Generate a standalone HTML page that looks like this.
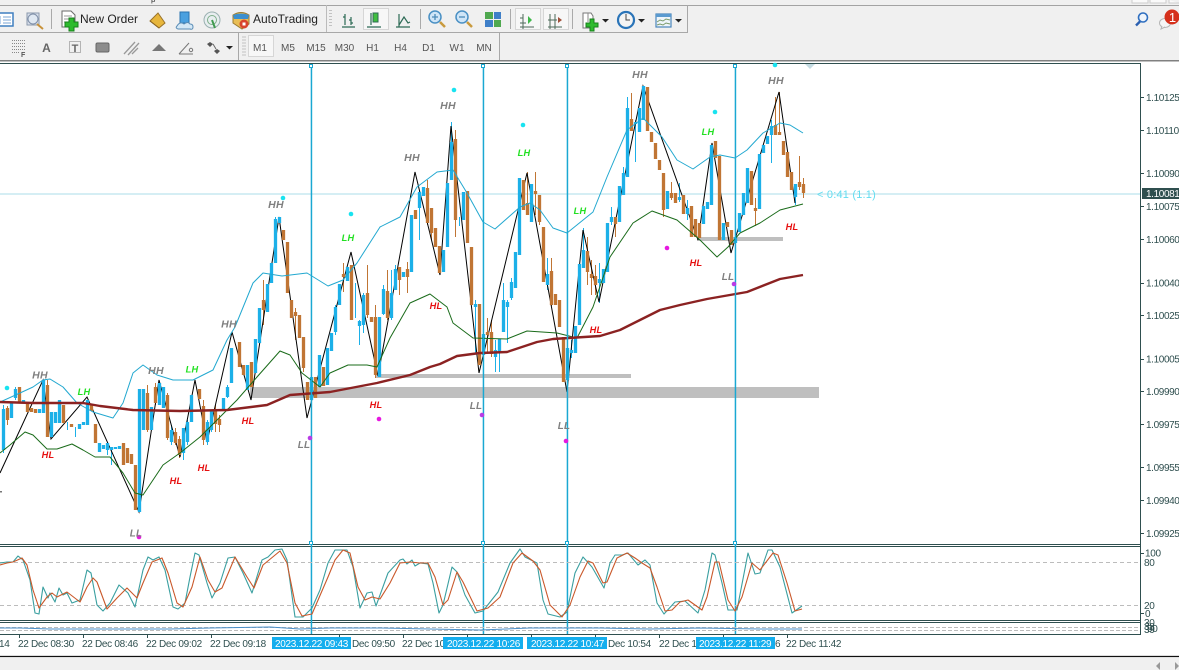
<!DOCTYPE html>
<html><head><meta charset="utf-8"><style>
html,body{margin:0;padding:0;background:#fff;width:1179px;height:670px;overflow:hidden}
svg{display:block;font-family:"Liberation Sans",sans-serif}
.p{font-size:10px;fill:#2f4f4f;letter-spacing:-.38px}
.t{font-size:10px;fill:#2f4f4f;letter-spacing:-.3px}
.w{font-size:10px;fill:#fff;letter-spacing:-.3px}
.lb{font-weight:bold;font-style:italic;text-anchor:middle;letter-spacing:.3px}
.hh{font-size:10.5px}.ll{font-size:9.8px}.g{font-size:9.2px}
.tf{font-size:10px;fill:#555;text-anchor:middle}
</style></head><body>
<svg width="1179" height="670" viewBox="0 0 1179 670" xmlns="http://www.w3.org/2000/svg">
<!-- toolbars -->
<rect width="1179" height="61" fill="#f0f0f0"/>
<rect x="0" y="5" width="1179" height="1" fill="#a3a3a3"/>
<rect x="0" y="32" width="687" height="1" fill="#a8a8a8"/>
<rect x="687" y="5" width="1" height="28" fill="#a8a8a8"/>
<rect x="499" y="33" width="1" height="27" fill="#a8a8a8"/>
<rect x="238" y="33" width="1" height="27" fill="#a8a8a8"/>
<rect x="326" y="5" width="1" height="27" fill="#bbb"/>
<rect x="0" y="60" width="1179" height="1.5" fill="#808080"/>
<path d="M1132 0v3h16v-3M1150 0v3h16v-3M1169 0v3h10" fill="#fafafa" stroke="#ccc"/>
<text x="151" y="2" font-size="8" fill="#333">p</text>
<!-- active buttons -->
<g fill="#f7f7f7" stroke="#d6d6d6"><rect x="363.500" y="8.500" width="25" height="21"/><rect x="515.500" y="8.500" width="25" height="21"/><rect x="543.500" y="8.500" width="25" height="21"/><rect x="248.500" y="35.500" width="25" height="21"/></g>
<!-- row1 icons -->
<rect x="-6" y="13" width="19" height="13" fill="#fff" stroke="#3f7fc0" stroke-width="1.500"/><path d="M0 16v8M3 17h8M3 20h8M3 23h8" stroke="#7aa6d6"/>
<rect x="27" y="13" width="12" height="12" fill="#d8dfea" stroke="#8a99ad"/><circle cx="33" cy="19" r="5" fill="#dfe8f2" stroke="#7f8fa8"/><path d="M37 24l6 5" stroke="#c8923a" stroke-width="2"/>
<rect x="51" y="9" width="1" height="20" fill="#aaa"/>
<path d="M62 11h9l4 4v12H62z" fill="#fff" stroke="#6a6a6a"/><path d="M64 16h8M64 19h8M64 22h5" stroke="#999"/>
<path d="M69 18h5v4h4v5h-4v4h-5v-4h-4v-5h4z" fill="#2dbb2d" stroke="#17801c"/>
<text x="80" y="23" font-size="12" fill="#222">New Order</text>
<path d="M150 21l8-8 7 10-6 5z" fill="#e7b63c" stroke="#99722a"/><path d="M150 21l9 7" stroke="#8a6420"/>
<rect x="180" y="12" width="9" height="11" fill="#4aa0df" stroke="#2a73b0"/><path d="M177 26q3-5 7-2 4-3 6 0 3 0 3 3t-3 2h-12q-3-1-1-3z" fill="#d4e8f6" stroke="#5a8cb5"/>
<circle cx="212" cy="20" r="8" fill="#e8eef0" stroke="#9ab0b0"/><circle cx="212" cy="20" r="4.500" fill="none" stroke="#7fae8a"/><path d="M212 20l3 8" stroke="#3f9a4f" stroke-width="2"/>
<path d="M233 15q8-5 16 0v9l-7 5-9-6z" fill="#e9be55" stroke="#9c7b30"/><path d="M233 15q8-3 16 0l-1 4h-14z" fill="#3c8fce"/><circle cx="244" cy="24" r="4.500" fill="#d8442c"/><rect x="242.500" y="22.500" width="3" height="3" fill="#fff"/>
<text x="253" y="23" font-size="12" fill="#222">AutoTrading</text>
<g fill="#c2c2c2"><rect x="329" y="10" width="3" height="1"/><rect x="329" y="13" width="3" height="1"/><rect x="329" y="16" width="3" height="1"/><rect x="329" y="19" width="3" height="1"/><rect x="329" y="22" width="3" height="1"/><rect x="329" y="25" width="3" height="1"/></g>
<g fill="none" stroke="#2c6a55" stroke-width="1.200"><path d="M342 27h13M345 14v11M351 17v8M343 17h2M351 23h2M349 20h2"/><path d="M367 27h14M371 13v12"/><path d="M396 27h14M399 14v13M399 25l5-8 4 6 2-1"/></g>
<rect x="373" y="13" width="5" height="9" fill="#3fbf3f" stroke="#2c6a55"/>
<rect x="420" y="9" width="1" height="20" fill="#aaa"/>
<circle cx="435" cy="17" r="6" fill="#cfe5f7" stroke="#4a90c4" stroke-width="1.500"/><path d="M432 17h6M435 14v6" stroke="#4a8ab8" stroke-width="1.300"/><path d="M440 22l5 5" stroke="#c99a3e" stroke-width="2.500"/>
<circle cx="462" cy="17" r="6" fill="#cfe5f7" stroke="#4a90c4" stroke-width="1.500"/><path d="M459 17h6" stroke="#4a8ab8" stroke-width="1.300"/><path d="M467 22l5 5" stroke="#c99a3e" stroke-width="2.500"/>
<rect x="485" y="12" width="8" height="7" fill="#4fa84f"/><rect x="494" y="12" width="7" height="7" fill="#3f7fc8"/><rect x="485" y="20" width="8" height="7" fill="#3f7fc8"/><rect x="494" y="20" width="7" height="7" fill="#4fa84f"/>
<rect x="510" y="9" width="1" height="20" fill="#aaa"/>
<path d="M520 27h14M523 14v15M520 23h6M520 18h3" stroke="#4d6a5a" fill="none"/><path d="M528 16l4 4-4 4z" fill="#3fb84a"/>
<path d="M548 27h14M550 14v15M555 14v15M548 20h9" stroke="#4d6a5a" fill="none"/><path d="M562 20l-4-3v6z" fill="#a0503a"/>
<rect x="572" y="9" width="1" height="20" fill="#aaa"/>
<path d="M583 13h8l2 3v12h-10z" fill="#fff" stroke="#777"/><path d="M588 13v9" stroke="#888"/>
<path d="M590 19h4v4h4v4h-4v4h-4v-4h-4v-4h4z" fill="#2dbb2d" stroke="#17801c"/>
<path d="M602 19h7l-3.500 3.500z" fill="#222"/>
<circle cx="626" cy="20" r="8" fill="#f4f4f4" stroke="#2a74b8" stroke-width="2.200"/><path d="M626 14v6h4" stroke="#444" fill="none"/>
<path d="M638 19h7l-3.500 3.500z" fill="#222"/>
<rect x="656" y="14" width="15" height="13" fill="#eef5fa" stroke="#4a85bb" stroke-width="1.200"/><rect x="656" y="14" width="15" height="3" fill="#5a9ad0"/><path d="M657 22l3-2 3 1 3-2 4 1M657 25l3-1 3 1 3-2 4 1" stroke="#7a9a6a" fill="none"/>
<path d="M675 19h7l-3.500 3.500z" fill="#222"/>
<circle cx="1143" cy="17.500" r="4.500" fill="#eef4fb" stroke="#2f6fc0" stroke-width="1.600"/><path d="M1140 21.500l-4 4" stroke="#2a5fb0" stroke-width="2.400"/>
<ellipse cx="1165" cy="23" rx="5.500" ry="4.500" fill="#f5f5f5" stroke="#b5b5b5"/><path d="M1162 26l-1 3 4-2" fill="#f5f5f5" stroke="#b5b5b5"/>
<circle cx="1172" cy="17" r="7.500" fill="#d5301c"/><text x="1172.500" y="22" font-size="13" fill="#fff" text-anchor="middle">1</text>
<!-- row2 icons -->
<path d="M12 40.500h13M12 43.500h13M12 46.500h13M12 49.500h13M12 52.500h8" stroke="#888" stroke-dasharray="1 1" fill="none"/>
<text x="21" y="57" font-size="7" font-weight="bold" fill="#555">F</text>
<text x="46.500" y="52" font-size="12" font-weight="bold" fill="#666" text-anchor="middle">A</text>
<rect x="69.500" y="41.500" width="11" height="11" fill="none" stroke="#777" stroke-dasharray="1 1"/><text x="75" y="52" font-size="11" font-weight="bold" fill="#666" text-anchor="middle">T</text>
<rect x="96" y="43" width="13" height="9" rx="1.500" fill="#8c8c8c" stroke="#666"/>
<path d="M124 54l11-12M128 55l11-12M132 54l6-6" stroke="#999" stroke-width="1.300"/>
<path d="M152 51l7-7 7 7z" fill="#777"/>
<path d="M179 54h14M179 54l10-11" stroke="#777" fill="none"/><circle cx="191" cy="50" r="1.700" fill="none" stroke="#777"/>
<path d="M210 42l3 2-3 3-3-3zM217 49l3 2-3 3-3-3z" fill="#555"/><path d="M213 44l3 5" stroke="#666"/>
<path d="M226 46h7l-3.500 3.500z" fill="#222"/>
<path d="M242 37h4M242 40h4M242 43h4M242 46h4M242 49h4M242 52h4M242 55h4" stroke="#c2c2c2"/>
<text class="tf" x="260" y="51">M1</text><text class="tf" x="288" y="51">M5</text><text class="tf" x="316" y="51">M15</text><text class="tf" x="344.500" y="51">M30</text><text class="tf" x="372.500" y="51">H1</text><text class="tf" x="400.500" y="51">H4</text><text class="tf" x="428.500" y="51">D1</text><text class="tf" x="457" y="51">W1</text><text class="tf" x="484" y="51">MN</text>
<!-- chart frame -->
<rect x="0" y="63" width="1140" height="1" fill="#2f4f4f"/>
<rect x="1140" y="63" width="1" height="571" fill="#2f4f4f"/>
<rect x="0" y="544" width="1140" height="1" fill="#2f4f4f"/>
<rect x="0" y="546" width="1141" height="1" fill="#2f4f4f"/>
<rect x="0" y="620" width="1141" height="1" fill="#2f4f4f"/>
<rect x="0" y="622" width="1141" height="1" fill="#2f4f4f"/>
<rect x="0" y="634" width="1141" height="1" fill="#2f4f4f"/>
<!-- grey zones -->
<rect x="250" y="387" width="569" height="11" fill="#bfbfbf"/>
<rect x="375" y="374" width="256" height="4" fill="#bfbfbf"/>
<rect x="697" y="237" width="86" height="4" fill="#bfbfbf"/>
<!-- crosshair -->
<rect x="0" y="193.500" width="1140" height="1" fill="#abdde8"/>
<!-- wicks -->
<path fill="none" stroke="#1cb0e8" d="M3.500 405V453M15.500 387V400M67.500 422V430M75.500 427V437M107.500 442V455M111.500 447V465M171.500 425V445M183.500 428V460M187.500 420V445M207.500 420V445M211.500 410V432M227.500 385V398M275.500 217V263M335.500 305V335M355.500 283V318M359.500 320V345M363.500 293V333M383.500 285V315M391.500 270V320M395.500 265V290M419.500 190V240M451.500 122V180M459.500 217V226M475.500 300V353M483.500 334V380M495.500 340V372M499.500 339V372M503.500 283V332M507.500 300V343M511.500 278V300M547.500 258V290M571.500 340V358M583.500 228V268M599.500 263V303M611.500 207V225M623.500 167V195M627.500 97V177M635.500 120V162M679.500 183V202M687.500 200V220M771.500 120V163M795.500 184V205"/>
<path fill="none" stroke="#c07534" d="M7.500 406V425M47.500 380V437M147.500 385V432M155.500 383V405M167.500 393V440M175.500 428V445M179.500 436V458M203.500 400V445M215.500 405V432M219.500 415V432M263.500 280V325M295.500 308V340M303.500 337V372M343.500 263V292M367.500 265V318M375.500 305V378M387.500 270V320M399.500 267V295M407.500 262V293M427.500 180V225M431.500 208V240M455.500 130V237M487.500 318V353M491.500 320V357M527.500 172V215M535.500 172V215M539.500 195V225M551.500 258V306M587.500 237V285M591.500 260V295M595.500 265V295M615.500 217V237M631.500 93V131M663.500 173V217M671.500 182V200M755.500 198V226M775.500 97V135M779.500 92V135M799.500 156V190M803.500 178V198"/>
<!-- black zigzag -->
<polyline fill="none" stroke="#000" stroke-width="1" points="0,473 43,380 51,439 87,397 139,512 159,380 180,457 195,380 207,442 232,332 251,400 279,217 307,418 351,252 378,376 415,172 440,275 451,126 479,373 527,173 567,392 583,230 599,302 643,86 698,240 712,143 731,253 779,92 795,203"/>
<!-- bodies -->
<path fill="none" stroke="#c07534" stroke-width="3.300" d="M7.500 408V420M19.500 387V402M27.500 402V412M31.500 408V412M35.500 409V413M47.500 385V437M63.500 405V423M71.500 424V427M91.500 405V411M95.500 424V443M123.500 443V465M127.500 448V463M131.500 454V464M135.500 465V510M147.500 393V430M155.500 387V403M167.500 395V438M175.500 432V443M179.500 439V455M199.500 389V399M203.500 406V440M215.500 409V424M219.500 419V425M239.500 342V367M243.500 365V375M251.500 362V387M263.500 300V310M283.500 230V240M287.500 242V293M291.500 300V318M295.500 312V316M299.500 315V338M303.500 337V368M307.500 382V400M315.500 377V398M323.500 367V386M343.500 274V277M351.500 265V320M367.500 293V315M371.500 317V322M375.500 317V375M387.500 291V318M399.500 267V280M407.500 269V277M415.500 210V219M427.500 188V223M431.500 208V233M435.500 228V247M439.500 246V273M455.500 139V220M467.500 191V243M471.500 247V305M479.500 304V365M487.500 332V335M491.500 332V354M523.500 180V210M527.500 203V215M535.500 191V194M539.500 195V222M543.500 227V282M551.500 271V305M555.500 294V305M559.500 300V327M563.500 337V382M587.500 251V272M591.500 274V278M595.500 276V285M615.500 217V224M631.500 119V131M647.500 87V131M651.500 132V142M655.500 143V159M659.500 160V170M663.500 173V210M671.500 193V198M675.500 193V203M683.500 195V214M691.500 206V237M695.500 219V237M699.500 223V238M715.500 141V158M719.500 156V240M727.500 222V227M731.500 230V245M751.500 171V205M755.500 208V211M775.500 125V135M779.500 132V135M783.500 141V155M787.500 152V177M791.500 172V190M799.500 182V187M803.500 184V193"/>
<path fill="none" stroke="#1cb0e8" stroke-width="3.300" d="M3.500 409V450M11.500 403V418M15.500 389V398M23.500 400V403M39.500 409V413M43.500 380V413M51.500 412V437M55.500 412V423M59.500 400V423M79.500 424V429M83.500 422V425M87.500 400V425M99.500 443V452M103.500 445V449M107.500 443V450M111.500 447V450M115.500 447V449M119.500 446V449M139.500 389V512M143.500 389V430M151.500 407V430M159.500 383V405M163.500 387V408M171.500 430V442M183.500 428V453M187.500 422V442M191.500 395V422M207.500 422V442M211.500 410V430M223.500 398V410M227.500 387V397M231.500 348V383M247.500 365V390M255.500 339V373M259.500 308V343M267.500 284V312M271.500 263V283M275.500 219V263M279.500 217V223M311.500 377V400M319.500 355V387M327.500 348V385M331.500 333V351M335.500 307V332M339.500 284V305M347.500 267V281M359.500 321V326M363.500 295V325M379.500 317V377M383.500 289V314M391.500 293V318M395.500 269V290M403.500 272V277M411.500 215V272M419.500 192V208M423.500 187V196M443.500 250V272M447.500 183V247M451.500 142V180M463.500 192V220M475.500 304V307M483.500 334V355M495.500 350V357M499.500 339V353M503.500 300V332M507.500 302V307M511.500 282V298M515.500 252V288M519.500 178V255M531.500 184V222M547.500 274V285M567.500 348V380M571.500 350V353M575.500 326V353M579.500 264V325M583.500 250V268M599.500 279V283M603.500 269V283M607.500 223V272M611.500 217V222M619.500 186V222M623.500 173V195M627.500 108V177M635.500 122V124M639.500 108V132M643.500 86V120M667.500 191V209M679.500 197V200M687.500 208V214M703.500 206V224M707.500 202V209M711.500 145V205M723.500 223V240M735.500 237V243M739.500 213V232M743.500 193V215M747.500 168V203M759.500 154V209M763.500 145V153M767.500 136V144M771.500 126V135M795.500 184V197"/>
<!-- band lines -->
<polyline fill="none" stroke="#22a8d0" stroke-linejoin="round" points="0,402 20,393 33,387 43,380 50,379 63,387 77,403 93,412 113,418 123,403 133,373 143,365 157,375 173,380 193,380 213,370 227,340 235,327 253,283 263,273 282,276 307,273 328,286 343,280 357,263 380,227 400,217 417,187 437,172 453,170 467,193 483,222 495,229 520,207 530,203 540,210 553,228 567,233 593,212 607,177 627,130 643,118 662,137 677,160 693,169 710,157 720,155 735,158 747,150 763,133 780,123 790,125 803,133"/>
<polyline fill="none" stroke="#1a6b1a" stroke-linejoin="round" points="0,453 10,445 25,432 33,435 47,449 57,449 72,444 83,450 95,457 110,457 123,473 135,493 143,495 163,465 180,453 200,437 227,410 237,400 257,377 280,351 290,355 302,373 320,387 330,373 348,365 367,365 377,367 390,338 410,303 430,294 447,307 453,323 473,338 507,339 527,331 557,333 577,338 593,307 610,257 633,223 652,211 677,220 700,240 717,257 728,247 740,233 760,223 780,210 803,204"/>
<polyline fill="none" stroke="#8b2222" stroke-width="2.400" stroke-linejoin="round" points="0,402 33,403 83,403 100,406 133,410 180,411 227,410 267,405 290,395 330,392 377,383 410,375 430,367 440,364 457,356 480,353 507,352 537,342 553,339 600,336 620,330 640,320 660,310 680,305 707,299 747,292 780,279 803,275"/>
<!-- vertical lines -->
<g fill="#1aa8d2"><rect x="310.700" y="64" width="1.500" height="570"/><rect x="482.700" y="64" width="1.500" height="570"/><rect x="566.700" y="64" width="1.500" height="570"/><rect x="734.700" y="64" width="1.500" height="570"/></g>
<g fill="#fff" stroke="#1aa8d2"><rect x="309.500" y="64.500" width="3" height="3"/><rect x="481.500" y="64.500" width="3" height="3"/><rect x="565.500" y="64.500" width="3" height="3"/><rect x="733.500" y="64.500" width="3" height="3"/><rect x="309.500" y="541.500" width="3" height="3"/><rect x="481.500" y="541.500" width="3" height="3"/><rect x="565.500" y="541.500" width="3" height="3"/><rect x="733.500" y="541.500" width="3" height="3"/></g>
<!-- dots -->
<g fill="#19e3f0"><circle cx="7" cy="388" r="2.300"/><circle cx="283" cy="198" r="2.300"/><circle cx="351" cy="214" r="2.300"/><circle cx="454" cy="90" r="2.300"/><circle cx="523" cy="125" r="2.300"/><circle cx="715" cy="112" r="2.300"/><circle cx="775" cy="65" r="2.300"/></g>
<g fill="#e619e0"><circle cx="139" cy="537" r="2.300"/><circle cx="379" cy="419" r="2.300"/><circle cx="667" cy="248" r="2.300"/><circle cx="566" cy="441" r="2.300"/></g>
<g fill="#b83ce6"><circle cx="310" cy="438" r="2.300"/><circle cx="482" cy="415" r="2.300"/><circle cx="734" cy="284" r="2.300"/></g>
<path d="M805 64h10l-5 5z" fill="#c5dbe2"/>
<rect x="0" y="491" width="2" height="1.500" fill="#777"/>
<!-- labels -->
<g class="lb hh" fill="#808080"><text x="40" y="378.500">HH</text><text x="156" y="374">HH</text><text x="229" y="327.500">HH</text><text x="276" y="208">HH</text><text x="412" y="161">HH</text><text x="448" y="109">HH</text><text x="640" y="78">HH</text><text x="776" y="84">HH</text></g>
<g class="lb ll" fill="#808080"><text x="136" y="536.500">LL</text><text x="304" y="448">LL</text><text x="476" y="409">LL</text><text x="564" y="429">LL</text><text x="728" y="280">LL</text></g>
<g class="lb g" fill="#22e022"><text x="84" y="395">LH</text><text x="192" y="372.500">LH</text><text x="348" y="241">LH</text><text x="524" y="156">LH</text><text x="580" y="214">LH</text><text x="708" y="135">LH</text></g>
<g class="lb g" fill="#e60f0f"><text x="48" y="458">HL</text><text x="176" y="484">HL</text><text x="204" y="471">HL</text><text x="248" y="424">HL</text><text x="376" y="408">HL</text><text x="436" y="309">HL</text><text x="596" y="333">HL</text><text x="696" y="266">HL</text><text x="792" y="230">HL</text></g>
<text x="817" y="198" font-size="11" fill="#62dcf0" letter-spacing=".2">&lt; 0:41 (1.1)</text>
<!-- price axis -->
<path d="M1141 97.500h3M1141 130.500h3M1141 173.500h3M1141 206.500h3M1141 239.500h3M1141 283.500h3M1141 315.500h3M1141 359.500h3M1141 391.500h3M1141 424.500h3M1141 467.500h3M1141 500.500h3M1141 533.500h3M1141 553.500h3M1141 613.500h3" stroke="#2f4f4f"/>
<g class="p"><text x="1146" y="101">1.10125</text><text x="1146" y="134">1.10110</text><text x="1146" y="177">1.10090</text><text x="1146" y="210">1.10075</text><text x="1146" y="243">1.10060</text><text x="1146" y="286.500">1.10040</text><text x="1146" y="319">1.10025</text><text x="1146" y="362.500">1.10005</text><text x="1146" y="395">1.09990</text><text x="1146" y="428">1.09975</text><text x="1146" y="471">1.09955</text><text x="1146" y="504">1.09940</text><text x="1146" y="537">1.09925</text></g>
<rect x="1142" y="188" width="37" height="11" fill="#2f4f4f"/><text x="1146" y="197" class="w" style="letter-spacing:-.38px">1.10081</text>
<!-- stoch -->
<path d="M0 562.500H1140M0 605.500H1140" stroke="#bcbcbc" stroke-dasharray="4 3" fill="none"/>
<polyline fill="none" stroke="#3a9fa0" stroke-width="1.100" stroke-linejoin="round" points="0,563 7,562 13,562 18,556 23,560 30,580 35,613 39,614 43,587 48,598 50,593 55,602 59,588 63,595 67,593 72,603 80,600 87,570 91,573 97,605 103,611 110,603 119,585 128,593 135,607 143,570 148,557 153,560 159,557 165,570 173,607 178,609 185,603 190,577 195,553 199,555 207,583 212,598 220,583 228,558 235,557 243,573 252,593 262,560 268,557 275,550 282,549 287,560 295,617 303,617 312,608 320,590 328,563 335,550 347,550 353,567 360,608 367,593 372,592 376,606 388,573 400,560 403,559 407,564 412,560 415,566 420,563 428,564 433,583 439,613 443,605 452,567 457,572 465,595 475,613 483,611 498,592 510,563 520,549 525,557 537,563 543,600 548,614 560,617 567,612 575,573 583,557 592,567 604,588 610,563 615,555 622,555 628,553 638,565 645,560 650,565 657,603 664,614 675,602 685,601 698,613 705,590 712,553 715,555 722,583 728,610 737,610 748,553 755,574 760,573 768,550 772,550 780,567 792,613 802,606"/>
<polyline fill="none" stroke="#c9582a" stroke-width="1.100" stroke-linejoin="round" points="0,565 7,563 13,562 22,558 27,565 33,590 39,608 47,597 52,593 57,597 67,592 80,602 87,587 93,578 97,582 107,609 117,598 127,588 137,598 143,583 152,562 162,558 168,573 177,603 183,607 192,587 200,557 208,580 215,592 222,588 235,557 247,577 254,588 263,565 280,551 287,563 295,603 302,616 312,614 328,577 335,560 343,550 350,553 358,587 365,600 372,597 380,599 390,583 400,563 410,562 420,563 428,563 435,577 443,605 448,600 457,572 463,582 477,611 488,608 500,597 513,563 522,553 533,561 540,570 550,605 562,617 570,605 580,577 588,561 593,563 603,583 607,582 617,558 627,553 635,558 642,563 650,568 657,587 665,611 672,610 680,602 688,600 702,610 707,597 715,562 719,562 728,600 735,611 742,597 752,563 760,570 773,553 778,555 787,583 795,611 802,609"/>
<!-- 3rd panel -->
<path d="M0 627.500H1140M0 630.500H1140" stroke="#bcbcbc" stroke-dasharray="4 2" fill="none"/>
<polyline fill="none" stroke="#4a8fc8" stroke-width="1" points="0,628 20,628 50,629 90,629 130,629 170,629 210,628 270,627 300,629 330,628 380,628 430,629 480,630 530,628 600,628 650,629 700,628 760,629 802,629"/>
<g class="t"><text x="1145" y="556.500">100</text><text x="1144" y="566">80</text><text x="1144" y="609">20</text><text x="1145" y="617">0</text><text x="1144" y="626">30</text><text x="1144" y="630">38</text><text x="1144" y="633">39</text><text x="1147" y="632">90</text></g>
<!-- time axis -->
<path d="M19.500 635v3M83.500 635v3M147.500 635v3M211.500 635v3M339.500 635v3M403.500 635v3M467.500 635v3M531.500 635v3M595.500 635v3M659.500 635v3M723.500 635v3M787.500 635v3" stroke="#2f4f4f"/>
<g class="t"><text x="-1" y="647">14</text><text x="18" y="647">22 Dec 08:30</text><text x="82" y="647">22 Dec 08:46</text><text x="146" y="647">22 Dec 09:02</text><text x="210" y="647">22 Dec 09:18</text><text x="352" y="647">Dec 09:50</text><text x="402" y="647">22 Dec 10</text><text x="608" y="647">Dec 10:54</text><text x="659" y="647">22 Dec 1</text><text x="775" y="647">6</text><text x="786" y="647">22 Dec 11:42</text></g>
<g fill="#14aeee"><rect x="272" y="637" width="79" height="12"/><rect x="443" y="637" width="80" height="12"/><rect x="527" y="637" width="80" height="12"/><rect x="696" y="637" width="79" height="12"/></g>
<g class="w"><text x="275" y="647">2023.12.22 09:43</text><text x="447" y="647">2023.12.22 10:26</text><text x="531" y="647">2023.12.22 10:47</text><text x="699" y="647">2023.12.22 11:29</text></g>
<!-- bottom -->
<rect x="0" y="655" width="1179" height="1" fill="#dcdcdc"/>
<rect x="0" y="656" width="1179" height="1.200" fill="#111"/>
<rect x="0" y="657.200" width="1179" height="13" fill="#f0f0f0"/>
<path d="M1160 662l-4 4 4 4zM1175 662l4 4-4 4z" fill="#999"/>
</svg>
</body></html>
